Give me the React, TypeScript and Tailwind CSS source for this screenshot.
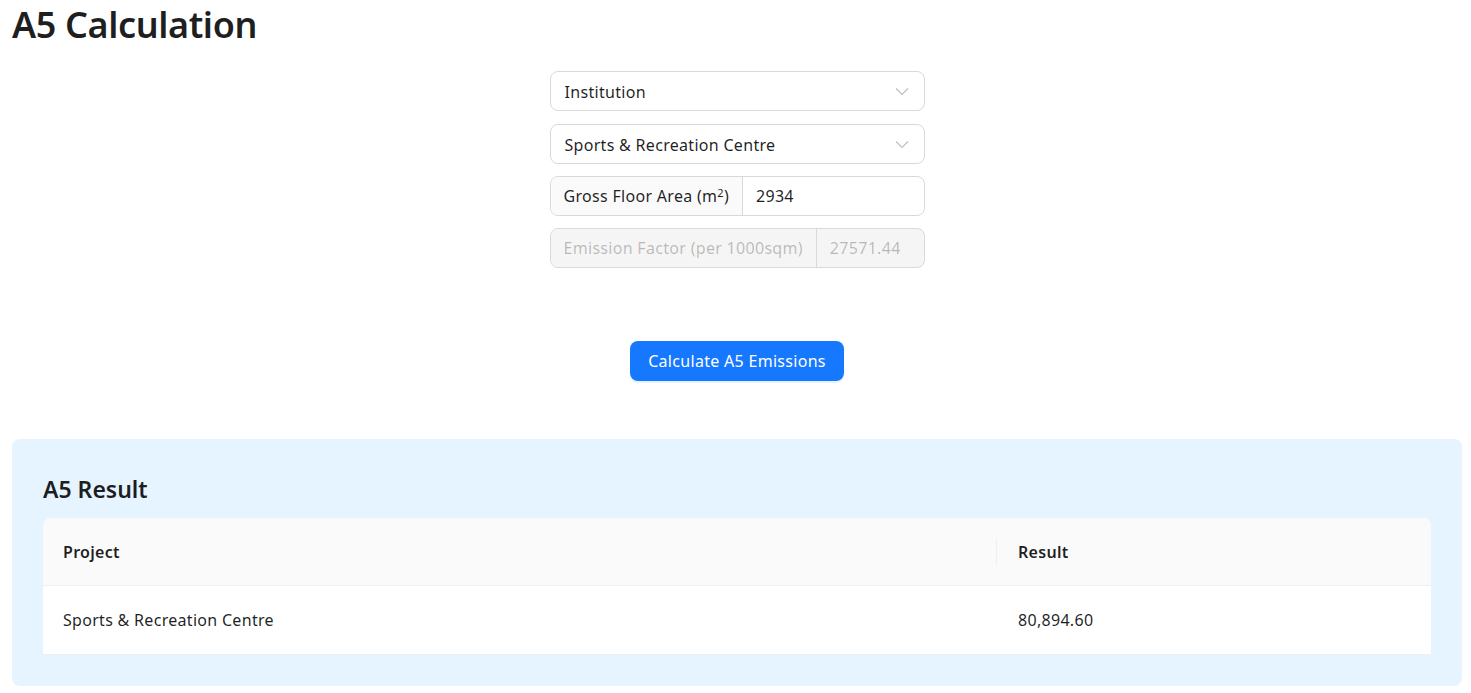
const font = "font-['Segoe_UI','Noto_Sans',sans-serif]"

function Chevron() {
  return (
    <svg width="14" height="9" viewBox="0 0 14 9" fill="none" className="text-[rgba(0,0,0,0.25)]">
      <path d="M1 1.5l6 6 6-6" stroke="currentColor" strokeWidth="1.2" />
    </svg>
  )
}

function Select({ value }: { value: string }) {
  return (
    <div className="flex h-10 w-full items-center justify-between rounded-lg border border-[#d9d9d9] bg-white pl-[14px] pr-[15px] text-base tracking-[0.3px] text-[rgba(0,0,0,0.88)]">
      <span className="pt-[1px]">{value}</span>
      <Chevron />
    </div>
  )
}

function AddonInput({
  label,
  value,
  disabled,
}: {
  label: React.ReactNode
  value: string
  disabled?: boolean
}) {
  return (
    <div
      className={`flex h-10 w-full items-stretch overflow-hidden rounded-lg border border-[#d9d9d9] text-base tracking-[0.3px] ${
        disabled ? 'bg-[#f5f5f5] text-[rgba(0,0,0,0.25)]' : 'bg-white text-[rgba(0,0,0,0.88)]'
      }`}
    >
      <div
        className={`flex items-center border-r border-[#d9d9d9] px-[13px] whitespace-nowrap ${
          disabled ? 'bg-[#f5f5f5]' : 'bg-[#fafafa]'
        }`}
      >
        {label}
      </div>
      <div className="flex flex-1 items-center px-[13px]">{value}</div>
    </div>
  )
}

export default function App() {
  return (
    <div className={`${font} min-h-screen bg-white pl-3 pr-[9px] text-[rgba(0,0,0,0.88)]`}>
      <h1 className="pt-[2px] text-[36px] font-semibold leading-[46px] tracking-[-0.4px]">A5 Calculation</h1>

      {/* Form */}
      <div className="mx-auto mt-[23px] flex w-[375px] flex-col gap-3">
        <Select value="Institution" />
        <div className="mt-[1px]">
          <Select value="Sports & Recreation Centre" />
        </div>
        <AddonInput
          label={
            <span>
              Gross Floor Area (m<sup className="text-[11px]">2</sup>)
            </span>
          }
          value="2934"
        />
        <AddonInput label="Emission Factor (per 1000sqm)" value="27571.44" disabled />
      </div>

      <div className="mt-[73px] flex justify-center">
        <button className="h-10 rounded-lg bg-[#1677ff] px-[18px] text-base tracking-[0.3px] text-white shadow-[0_2px_0_rgba(5,145,255,0.1)]">
          Calculate A5 Emissions
        </button>
      </div>

      {/* Result panel */}
      <div className="mt-[58px] rounded-lg bg-[#e6f4ff] px-[31px] pb-[31px] pt-[34px]">
        <h2 className="mb-[13px] text-[23px] font-semibold leading-8">A5 Result</h2>
        <div className="overflow-hidden rounded-t-lg bg-white text-base tracking-[0.3px]">
          <div className="flex border-b border-[#f0f0f0] bg-[#fafafa] font-semibold">
            <div className="relative flex h-[67px] w-[954px] items-center px-5">
              Project
              <span className="absolute right-0 top-1/2 h-[28px] w-px -translate-y-1/2 bg-[#f0f0f0]" />
            </div>
            <div className="flex flex-1 items-center px-[21px]">Result</div>
          </div>
          <div className="flex border-b border-[#f0f0f0]">
            <div className="flex h-[68px] w-[954px] items-center px-5">Sports &amp; Recreation Centre</div>
            <div className="flex flex-1 items-center px-[21px]">80,894.60</div>
          </div>
        </div>
      </div>
    </div>
  )
}
